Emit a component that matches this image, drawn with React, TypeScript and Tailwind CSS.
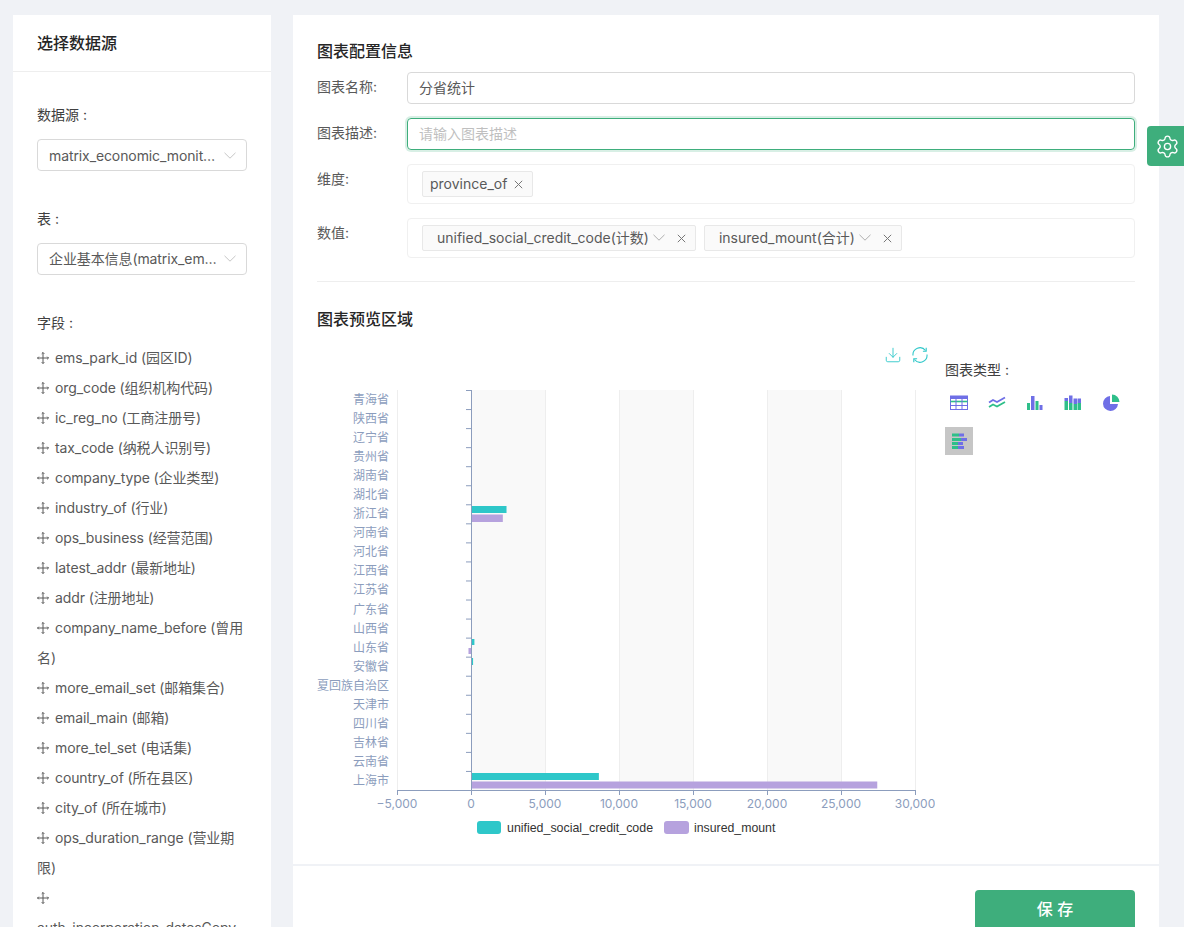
import React from "react";
import { Settings, Download } from "lucide-react";

const fields = [
  "ems_park_id (园区ID)", "org_code (组织机构代码)", "ic_reg_no (工商注册号)", "tax_code (纳税人识别号)",
  "company_type (企业类型)", "industry_of (行业)", "ops_business (经营范围)", "latest_addr (最新地址)",
  "addr (注册地址)", "company_name_before (曾用名)", "more_email_set (邮箱集合)", "email_main (邮箱)",
  "more_tel_set (电话集)", "country_of (所在县区)", "city_of (所在城市)", "ops_duration_range (营业期限)",
  "auth_incorporation_datesCopy (成立日期)",
];

const provinces = ["青海省","陕西省","辽宁省","贵州省","湖南省","湖北省","浙江省","河南省","河北省","江西省","江苏省","广东省","山西省","山东省","安徽省","夏回族自治区","天津市","四川省","吉林省","云南省","上海市"];

const DragIcon = () => (
  <svg viewBox="0 0 12 12" className="inline-block w-3 h-3 mr-[6px] align-[-1px]" fill="none" stroke="#595959" strokeWidth="1">
    <path d="M6 .5v11M.5 6h11" />
    <path d="M4.7 1.8 6 .5l1.3 1.3M4.7 10.2 6 11.5l1.3-1.3M1.8 4.7.5 6l1.3 1.3M10.2 4.7 11.5 6l-1.3 1.3" />
  </svg>
);

const Chevron = ({ className }: { className: string }) => (
  <svg viewBox="0 0 12 7" fill="none" stroke="currentColor" strokeWidth="0.9" className={className}>
    <path d="M.5 .8 6 6.2 11.5 .8" />
  </svg>
);

const Cross = ({ className }: { className: string }) => (
  <svg viewBox="0 0 9 9" fill="none" stroke="currentColor" strokeWidth="1" className={className}>
    <path d="M.8 .8l7.4 7.4M8.2 .8 .8 8.2" />
  </svg>
);

const Select = ({ text, up }: { text: string; up?: boolean }) => (
  <div className={`h-8 w-[210px] border border-[#d9d9d9] rounded-[4px] flex items-center pl-[11px] pr-[10px] text-[14px] tracking-[-0.1px] text-[#595959] ${up ? "pb-[2px]" : ""}`}>
    <span className="flex-1 truncate">{text}</span>
    <Chevron className="w-3 h-[7px] text-[#bfbfbf] ml-[6px] shrink-0" />
  </div>
);

const Tag = ({ text, chevron }: { text: string; chevron?: boolean }) => (
  <div className={`h-[26px] bg-[#fafafa] border border-[#e8e8e8] rounded-[2px] flex items-center text-[14px] text-[#595959] pb-[2px] ${chevron ? "pl-[14px] pr-[9px]" : "pl-[7px] pr-[9px]"}`}>
    <span>{text}</span>
    {chevron && <Chevron className="w-3 h-[7px] text-[#a6a6a6] ml-[4px]" />}
    <Cross className={`w-[9px] h-[9px] text-[#777] mt-[2px] ${chevron ? "ml-[12px]" : "ml-[7px]"}`} />
  </div>
);

const Row = ({ label, children, h = "mb-[14px]" }: { label: string; children: React.ReactNode; h?: string }) => (
  <div className={`flex ${h}`}>
    <div className="w-[90px] shrink-0 text-[14px] leading-[30px] text-[#595959]">{label}</div>
    <div className="flex-1">{children}</div>
  </div>
);

const SmallIcon = ({ children, active }: { children: React.ReactNode; active?: boolean }) => (
  <div className={`w-7 h-7 flex items-center justify-center ${active ? "bg-[#c6c6c6]" : ""}`}>
    <svg width="20" height="20" viewBox="0 0 20 20">{children}</svg>
  </div>
);

const P = "#6f6fe6";
const G = "#2fbf8a";

const Chart = () => {
  // offsets: svg origin is at page (317, 385)
  const ox = 317, oy = 385;
  const xs = [-5000, 0, 5000, 10000, 15000, 20000, 25000, 30000];
  const xp = (v: number) => 471 + (v / 5000) * 74 - ox;
  const top = 390 - oy, bottom = 790 - oy;
  const step = 400 / 21;
  const bars: [number, number, number, string][] = [
    [506, 7, 2400, "#2ec7c9"], [514.5, 7.5, 2150, "#b6a2de"],
    [639, 6, 230, "#2ec7c9"], [648, 6, -170, "#b6a2de"],
    [658, 7, 140, "#2ec7c9"],
    [773, 7, 8640, "#2ec7c9"], [781.5, 7, 27450, "#b6a2de"],
  ];
  return (
    <svg width="618" height="460" className="block" style={{ fontFamily: "Inter, 'Noto Sans CJK SC', sans-serif" }}>
      {[0, 2, 4].map((i) => (
        <rect key={i} x={xp(i * 5000)} y={top} width={74} height={400} fill="#f9f9f9" />
      ))}
      {xs.map((v) => (
        <line key={v} x1={xp(v) + 0.5} x2={xp(v) + 0.5} y1={top} y2={bottom} stroke="#eeeeee" />
      ))}
      {bars.map(([y, h, v, c], i) => (
        <rect key={i} x={v > 0 ? xp(0) : xp(v)} y={y - oy} width={Math.abs(xp(v) - xp(0))} height={h} fill={c} />
      ))}
      <line x1={xp(0) + 0.5} x2={xp(0) + 0.5} y1={top} y2={bottom} stroke="#8c9dbd" />
      {provinces.map((_, i) => (
        <line key={i} x1={xp(0) - 5} x2={xp(0)} y1={top + i * step + 0.5} y2={top + i * step + 0.5} stroke="#8c9dbd" />
      ))}
      {provinces.map((p, i) => (
        <text key={p} x={72} y={top + i * step + 10 + 4} textAnchor="end" fontSize="12" fill="#8c9dbd">{p}</text>
      ))}
      <line x1={xp(-5000)} x2={xp(30000) + 1} y1={bottom + 0.5} y2={bottom + 0.5} stroke="#8c9dbd" />
      {xs.map((v) => (
        <g key={v}>
          <line x1={xp(v) + 0.5} x2={xp(v) + 0.5} y1={bottom} y2={bottom + 5} stroke="#8c9dbd" />
          <text x={xp(v)} y={bottom + 18} textAnchor="middle" fontSize="12" fill="#8c9dbd">
            {v < 0 ? "−5,000" : v.toLocaleString("en-US")}
          </text>
        </g>
      ))}
      <rect x={477 - ox} y={821 - oy} width={24} height={13} rx={3} fill="#2ec7c9" />
      <text x={507 - ox} y={832 - oy} fontSize="12.4" fill="#333" style={{ fontFamily: "'Liberation Sans', sans-serif" }}>unified_social_credit_code</text>
      <rect x={664 - ox} y={821 - oy} width={25} height={13} rx={3} fill="#b6a2de" />
      <text x={694 - ox} y={832 - oy} fontSize="12.3" fill="#333" style={{ fontFamily: "'Liberation Sans', sans-serif" }}>insured_mount</text>
    </svg>
  );
};

export default function App() {
  return (
    <div className="h-[927px] w-[1184px] overflow-hidden bg-[#f0f2f6] relative font-['Inter','Noto_Sans_CJK_SC',sans-serif] flex items-start pt-[15px] pl-[13px] gap-[22px]">
      <aside className="w-[258px] h-[912px] shrink-0 overflow-hidden bg-white">
        <div className="h-[57px] border-b border-[#eeeeee] pl-[24px] flex items-center text-[16px] font-medium text-[#262626]">选择数据源</div>
        <div className="pl-[24px] pr-[24px] pt-[32px] text-[14px] text-[#404040]">
          <div className="leading-[22px] mb-[13px]">数据源 :</div>
          <Select text="matrix_economic_monitor_db" />
          <div className="leading-[22px] mt-[37px] mb-[13px]">表 :</div>
          <Select text="企业基本信息(matrix_ems_company)" up />
          <div className="leading-[22px] mt-[37px] mb-[9px]">字段 :</div>
          {fields.map((f) => (
            <div key={f} className="leading-[30px] tracking-[-0.1px] text-[#595959]">
              <DragIcon />{f}
            </div>
          ))}
        </div>
      </aside>

      <main className="w-[866px] h-[912px] shrink-0 flex flex-col">
        <div className="h-[849px] shrink-0 bg-white px-[24px] pt-[24px]">
          <div className="text-[16px] font-medium leading-[24px] text-[#262626] mb-[9px]">图表配置信息</div>
          <Row label="图表名称:">
            <div className="h-8 border border-[#d9d9d9] rounded-[4px] px-[11px] pb-[2px] flex items-center text-[14px] text-[#595959]">分省统计</div>
          </Row>
          <Row label="图表描述:">
            <div className="h-8 border border-[#3eae7c] rounded-[4px] px-[11px] pb-[2px] flex items-center text-[14px] text-[#bfbfbf] shadow-[0_0_0_2px_rgba(62,174,124,0.2)]">请输入图表描述</div>
          </Row>
          <Row label="维度:">
            <div className="h-10 border border-[#f0f0f0] rounded-[4px] px-[14px] flex items-center">
              <Tag text="province_of" />
            </div>
          </Row>
          <Row label="数值:" h="mb-0">
            <div className="h-10 border border-[#f0f0f0] rounded-[4px] px-[14px] flex items-center gap-[8px]">
              <Tag text="unified_social_credit_code(计数)" chevron />
              <Tag text="insured_mount(合计)" chevron />
            </div>
          </Row>
          <div className="border-t border-[#eeeeee] mt-[23px] mb-[25px]" />
          <div className="text-[16px] font-medium leading-[24px] text-[#262626]">图表预览区域</div>
          <div className="flex mt-[15px]">
            <div className="w-[618px] shrink-0">
              <div className="h-[39px] flex justify-end items-start gap-[9px] pr-[6px]">
                <Download size={18} strokeWidth={1.2} className="text-[#2ec7c9]" />
                <svg width="18" height="18" viewBox="0 0 18 18" fill="none" stroke="#2ec7c9" strokeWidth="1.1">
                  <path d="M2 9.5A7 7 0 0 1 14.5 4.5" />
                  <path d="M15.2 1.8v3.4h-3.3" />
                  <path d="M16 8.5A7 7 0 0 1 3.5 13.5" />
                  <path d="M2.8 16.2v-3.4h3.3" />
                </svg>
              </div>
              <Chart />
            </div>
            <div className="ml-[10px] flex-1 pt-[13px]">
              <div className="text-[14px] leading-[22px] text-[#404040]">图表类型 :</div>
              <div className="flex flex-wrap gap-x-[10px] gap-y-[10px] w-[190px] mt-[8px]">
                <SmallIcon>
                  <rect x="1.5" y="3" width="17" height="13.5" fill="none" stroke={P} strokeWidth="1" />
                  <rect x="1.5" y="3" width="17" height="3" fill={P} />
                  <path d="M1.5 8.5h17" stroke={G} strokeWidth="1.6" />
                  <path d="M1.5 12.5h17" stroke={P} strokeWidth="1" />
                  <path d="M7 5v11.5M13 5v11.5" stroke={P} strokeWidth="1" />
                </SmallIcon>
                <SmallIcon>
                  <path d="M2 9.5l4-2.5 4 2 8-4.5" fill="none" stroke={P} strokeWidth="1.8" />
                  <path d="M2 14l4-2.5 4 2 8-4.5" fill="none" stroke={G} strokeWidth="1.8" />
                </SmallIcon>
                <SmallIcon>
                  <rect x="2" y="10" width="3" height="7" fill={G} />
                  <rect x="6" y="3" width="3.5" height="14" fill={P} />
                  <rect x="10.5" y="8" width="3" height="9" fill={G} />
                  <rect x="14.5" y="12" width="3" height="5" fill={P} />
                </SmallIcon>
                <SmallIcon>
                  <rect x="1.5" y="8" width="3.5" height="9" fill={G} /><rect x="1.5" y="5" width="3.5" height="3" fill={P} />
                  <rect x="6" y="10" width="3.5" height="7" fill={G} /><rect x="6" y="2.5" width="3.5" height="7.5" fill={P} />
                  <rect x="10.5" y="11" width="3.5" height="6" fill={G} /><rect x="10.5" y="5.5" width="3.5" height="5.5" fill={P} />
                  <rect x="14.5" y="10" width="3.5" height="7" fill={G} /><rect x="14.5" y="5.5" width="3.5" height="4.5" fill={P} />
                </SmallIcon>
                <SmallIcon>
                  <path d="M9 3a7.5 7.5 0 1 0 8 8H9z" fill={P} />
                  <path d="M11 1.5A7.5 7.5 0 0 1 18.5 9H11z" fill={G} />
                </SmallIcon>
                <SmallIcon active>
                  <rect x="3" y="2.5" width="7" height="3" fill={G} /><rect x="10" y="2.5" width="5" height="3" fill={P} />
                  <rect x="3" y="7" width="9" height="3" fill={G} /><rect x="12" y="7" width="6" height="3" fill={P} />
                  <rect x="3" y="11" width="6" height="3" fill={G} /><rect x="9" y="11" width="5" height="3" fill={P} />
                  <rect x="3" y="15" width="6" height="3" fill={G} /><rect x="9" y="15" width="6" height="3" fill={P} />
                </SmallIcon>
              </div>
            </div>
          </div>
        </div>
        <div className="mt-[2px] flex-1 bg-white flex justify-end pr-[24px] pt-[24px] min-h-0 overflow-hidden">
          <div className="w-[160px] h-10 shrink-0 bg-[#3eae7c] rounded-[4px] text-white text-[16px] font-medium pb-[2px] flex items-center justify-center">保 存</div>
        </div>
      </main>

      <div className="absolute left-[1147px] top-[126px] w-[37px] h-[40px] bg-[#3eae7c] rounded-l-[4px] flex items-center justify-center pl-[3px]">
        <Settings size={25} strokeWidth={1.3} className="text-white" />
      </div>
    </div>
  );
}
